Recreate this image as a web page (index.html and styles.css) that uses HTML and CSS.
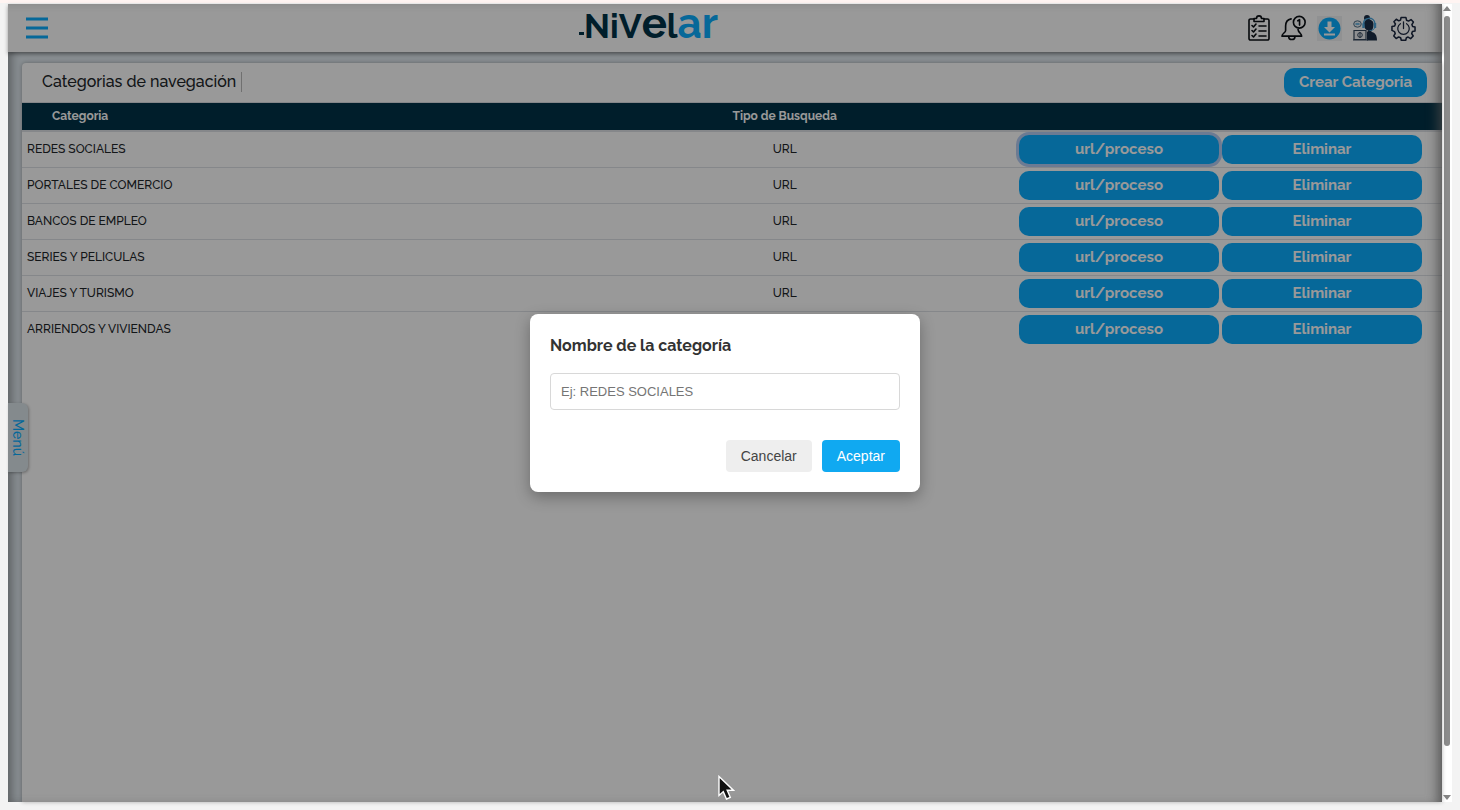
FILE: index.html
```
<!DOCTYPE html>
<html lang="es">
  <head>
    <meta charset="utf-8" />
    <title>Categorias de navegación</title>
    <link rel="stylesheet" href="styles.css">
  </head>

  <body>
    <div class="app">

      <!--Top bar-->
      <header class="topbar">
        <button class="iconBut" type="button" aria-label="Menu">
          <svg width="24" height="24" viewBox="0 0 24 24"><path d="M1 3h22M1 12h22M1 21h22" stroke="#0aaeff" stroke-width="3"/></svg>
        </button>

        <div class="logo">
          <svg width="5" height="6" viewBox="0 0 5 6"><path d="M0 0h5v3H0z" fill="#003248"/></svg>
          <span>NiV</span><span class="round">e</span><span>l</span><span class="round blue">ar</span>
        </div>

        <nav class="tools">
          <button class="iconBut" type="button" aria-label="Tareas">
            <svg width="22" height="26" viewBox="0 0 22 26" fill="none" stroke="#0b0f14" stroke-width="1.6" stroke-linejoin="round" stroke-linecap="round">
              <path d="M6 4H2.5A1.5 1.5 0 0 0 1 5.5V23.5A1.5 1.5 0 0 0 2.5 25H19.5A1.5 1.5 0 0 0 21 23.5V5.5A1.5 1.5 0 0 0 19.5 4H16"/>
              <path d="M6 6.5V3.5H8.5C8.5 0 13.5 0 13.5 3.5H16V6.5Z"/>
              <path d="M4 10.5l1.5 1.5 2.5-3M4 15.5l1.5 1.5 2.5-3M4 20.5l1.5 1.5 2.5-3M11 11h7M11 16h7M11 21h7"/>
            </svg>
          </button>
          <button class="iconBut" type="button" aria-label="Notificaciones">
            <svg width="25" height="26" viewBox="0 0 26 26" fill="none" stroke="#0b0f14" stroke-width="1.7" stroke-linecap="round" stroke-linejoin="round">
              <path d="M10.5 3.5C6.5 4.3 4.8 7.5 4.8 11V15.5C4.8 18 1 18.5 1 21.5H21.5C21.5 18.5 18 18 17.7 14.5"/>
              <path d="M8 22C8 26 14.5 26 14.5 22"/>
              <circle cx="19" cy="7" r="6.1"/>
              <path d="M17.5 5.5L19.3 4.3V10"/>
            </svg>
          </button>
          <button class="iconBut" type="button" aria-label="Descargar">
            <svg width="25" height="25" viewBox="0 0 25 25">
              <path fill="#f0f2f4" d="M0 0h25v25H0z"/>
              <circle cx="12.5" cy="12.5" r="11" fill="#0aaeff"/>
              <path fill="#fff" d="M10.5 5.5h4v5.5h3.5l-5.5 5.5L7 11h3.5zM7 17.5h11v2H7z"/>
            </svg>
          </button>
          <button class="iconBut" type="button" aria-label="Soporte">
            <svg width="24" height="26" viewBox="0 0 24 26">
              <circle cx="14" cy="3" r="3" fill="#1c2e46"/>
              <path fill="#1c2e46" d="M11 9C11 3 20.500 3 20.500 9C20.500 13 19.500 14.500 18.500 15.500V17C22 17.500 24 20 24 25.500H14V17L15.500 15.500C12 15 11 12 11 9Z"/>
              <path d="M10.5 9C10 2 21.5 1 22 9" fill="none" stroke="#4ba6dd" stroke-width="1.5"/>
              <path d="M10.5 8.5v4.5M22 8v5" fill="none" stroke="#4ba6dd" stroke-width="2.4"/>
              <path d="M21.5 12.5c0 2-2 3-5 3" fill="none" stroke="#4ba6dd"/>
              <ellipse cx="4.5" cy="9" rx="3.8" ry="3.2" fill="#e9eff3" stroke="#4f6f88"/>
              <path d="M2.5 9h4" stroke="#4ba6dd" stroke-width="1.5"/>
              <path d="M1 15.5h12v9H1zM0 25h15" fill="#eef1f4" stroke="#34475c" stroke-width="1.2"/>
              <circle cx="7" cy="20" r="2.3" fill="none" stroke="#34475c"/>
              <path d="M7 17v6" stroke="#34475c"/>
            </svg>
          </button>
          <button class="iconBut settings" type="button" aria-label="Ajustes">
            <svg width="25" height="25" viewBox="0 0 26 26" fill="none" stroke="#1b2740" stroke-width="1.6" stroke-linejoin="round" stroke-linecap="round">
              <path d="M10.5 1.5h5l.7 3 2 .8 2.6-1.6 2.5 2.6-1.6 2.6.8 2 2.5.6v4l-2.7.7-.8 2 1.6 2.6-2.7 2.7-2.6-1.6-1.8.8-.7 2.5h-4.6l-.7-2.6-2-.8-2.6 1.6-2.5-2.7 1.5-2.5-.8-2L1 15v-4l2.8-.7.8-2L3 5.9l2.5-2.5 2.6 1.6 1.8-.7z"/>
              <path d="M9.8 8a6 6 0 1 0 6.4 0M13 6v7" stroke-width="1.3"/>
            </svg>
          </button>
        </nav>
      </header>

      <!--Categories card-->
      <main class="content">
        <section class="card">
          <div class="cardHead">
            <h1 class="cardTitle">Categorias de navegación</h1>
            <button class="but" type="button">Crear Categoria</button>
          </div>

          <table class="categories">
            <thead>
              <tr><th>Categoria</th><th class="kind">Tipo de Busqueda</th><th class="actions"></th></tr>
            </thead>
            <tbody>
              <tr>
                <td>REDES SOCIALES</td><td class="kind">URL</td>
                <td class="actions"><div class="rowButs"><button class="but focused" type="button">url/proceso</button><button class="but" type="button">Eliminar</button></div></td>
              </tr>
              <tr>
                <td>PORTALES DE COMERCIO</td><td class="kind">URL</td>
                <td class="actions"><div class="rowButs"><button class="but" type="button">url/proceso</button><button class="but" type="button">Eliminar</button></div></td>
              </tr>
              <tr>
                <td>BANCOS DE EMPLEO</td><td class="kind">URL</td>
                <td class="actions"><div class="rowButs"><button class="but" type="button">url/proceso</button><button class="but" type="button">Eliminar</button></div></td>
              </tr>
              <tr>
                <td>SERIES Y PELICULAS</td><td class="kind">URL</td>
                <td class="actions"><div class="rowButs"><button class="but" type="button">url/proceso</button><button class="but" type="button">Eliminar</button></div></td>
              </tr>
              <tr>
                <td>VIAJES Y TURISMO</td><td class="kind">URL</td>
                <td class="actions"><div class="rowButs"><button class="but" type="button">url/proceso</button><button class="but" type="button">Eliminar</button></div></td>
              </tr>
              <tr>
                <td>ARRIENDOS Y VIVIENDAS</td><td class="kind"></td>
                <td class="actions"><div class="rowButs"><button class="but" type="button">url/proceso</button><button class="but" type="button">Eliminar</button></div></td>
              </tr>
            </tbody>
          </table>
        </section>
      </main>

      <button class="menuTab" type="button">Menú</button>

      <!--Dialog over the page-->
      <div class="overlay">
        <form class="dialog" action="#" role="dialog">
          <label class="dialogTitle" for="catName">Nombre de la categoría</label>
          <input class="dialogInput" type="text" id="catName" name="catName" placeholder="Ej: REDES SOCIALES">
          <div class="dialogButs">
            <button class="cancel" type="button">Cancelar</button>
            <button class="accept" type="button">Aceptar</button>
          </div>
        </form>
      </div>

      <svg class="pointer" width="17" height="26" viewBox="0 0 17 26"><path d="M1 1.5V20.5L5.3 16.6L8.5 24L12.3 22.3L9.2 15.2H15.3Z" fill="#111" stroke="#fff" stroke-width="1.4"/></svg>
    </div>

    <div class="scroll">
      <svg width="8" height="6" viewBox="0 0 8 6"><path d="M4 0l4 5H0z" fill="#858585"/></svg>
      <div class="thumb"></div>
      <svg width="8" height="6" viewBox="0 0 8 6"><path d="M4 6l4-5H0z" fill="#858585"/></svg>
    </div>
  </body>
</html>
```
FILE: styles.css
```
* {box-sizing: border-box;}

body {margin: 0;
      padding: 4px 8px 8px;
      height: 100vh;
      display: flex;
      font-family: Raleway, Lato, sans-serif;
      font-size: 12px;
      font-weight: 500;
      color: #212529;
      background: linear-gradient(#fff4f2 3px, #f3f3f3 3px);}

button {font-family: inherit;
        font-weight: inherit;
        border: 0;
        cursor: pointer;}

.app {position: relative;
      flex: 1;
      display: flex;
      flex-direction: column;
      background-color: #e2ebf1;}

/* top bar */
.topbar {display: flex;
         justify-content: space-between;
         align-items: center;
         height: 48px;
         padding: 0 26px 0 17px;
         background-color: white;
         box-shadow: 0 2px 4px rgba(0, 0, 0, 0.4);
         z-index: 1;}

.iconBut {display: flex;
          padding: 0;
          background: none;}

.logo {display: flex;
       align-items: baseline;
       padding-bottom: 6px;
       font-size: 34px;
       font-weight: bold;
       line-height: 40px;
       color: #003248;}

.logo .round {font-size: 42px;}

.logo .blue {color: #0aaeff;}

.tools {display: flex;
        justify-content: flex-end;
        align-items: center;
        gap: 11px;}

.settings {margin-left: 3px;}

/* card */
.content {flex: 1;
          display: flex;
          padding: 11px 0 0 14px;
          box-shadow: inset 8px 0 8px -4px rgba(0, 0, 0, 0.3);}

.card {flex: 1;
       background-color: white;
       border-radius: 4px 0 0 0;
       box-shadow: 0 0 4px rgba(0, 0, 0, 0.3);}

.cardHead {display: flex;
           justify-content: space-between;
           align-items: center;
           height: 40px;
           padding: 0 15px 1px 20px;
           border-bottom: 1px solid #dee2e6;}

.cardTitle {margin: 0;
            padding-right: 5px;
            font-size: 16px;
            font-weight: 500;
            line-height: 20px;
            border-right: 1px solid #bbb;}

.but {height: 29px;
      padding: 0 15px;
      font-size: 15px;
      font-weight: bold;
      line-height: 20px;
      color: white;
      background-color: #0aaeff;
      border-radius: 10px;}

.focused {box-shadow: 0 0 0 3px #b4cdf5;}

.categories {width: 100%;
             border-collapse: collapse;}

.categories th {height: 28px;
                padding: 0 0 2px 30px;
                text-align: left;
                color: white;
                background-color: #003248;
                border-bottom: 2px solid #dee2e6;}

.categories td {height: 36px;
                padding: 0 5px;
                border-top: 1px solid #dee2e6;}

.categories .kind {width: 33%;
                   padding-left: 0;
                   padding-right: 0;
                   text-align: center;}

.categories .actions {width: 423px;
                      padding-left: 0;
                      padding-right: 20px;}

.rowButs {display: flex;
          gap: 3px;}

.rowButs .but {flex: 1;}

/* side tab */
.menuTab {position: absolute;
          left: 0;
          top: 50%;
          height: 69px;
          width: 20px;
          padding: 0;
          font-size: 14px;
          line-height: 20px;
          writing-mode: vertical-rl;
          color: #0aaeff;
          background-color: #dde6ec;
          border-radius: 0 6px 6px 0;
          box-shadow: 1px 1px 3px rgba(0, 0, 0, 0.3);
          z-index: 1;}

/* dialog */
.overlay {position: absolute;
          inset: 0;
          display: flex;
          align-items: center;
          justify-content: center;
          background-color: rgba(0, 0, 0, 0.4);
          box-shadow: inset -10px 0 12px -6px rgba(70, 70, 70, 0.8);
          z-index: 2;}

.dialog {display: flex;
         flex-direction: column;
         width: 390px;
         padding: 20px;
         background-color: white;
         border-radius: 8px;
         box-shadow: 0 5px 15px rgba(0, 0, 0, 0.3);}

.dialogTitle {margin-bottom: 16px;
              font-size: 16px;
              font-weight: bold;
              line-height: 23px;
              color: #333;}

.dialogInput {height: 37px;
              padding: 0 10px;
              font-family: "Liberation Sans", Arial, sans-serif;
              font-size: 13px;
              border: 1px solid #d8d8d8;
              border-radius: 4px;}

.dialogButs {display: flex;
             justify-content: flex-end;
             gap: 10px;
             margin-top: 30px;}

.cancel, .accept {height: 32px;
                  padding: 0 15px;
                  font-family: "Liberation Sans", Arial, sans-serif;
                  font-size: 14px;
                  font-weight: normal;
                  border-radius: 4px;}

.cancel {color: #444;
         background-color: #eee;}

.accept {color: white;
         background-color: #10a9f1;}

.pointer {position: absolute;
          left: 710px;
          top: 771px;
          z-index: 3;}

/* scrollbar */
.scroll {display: flex;
         flex-direction: column;
         align-items: center;
         gap: 4px;
         width: 10px;
         padding: 2px 0;
         background-color: white;}

.thumb {width: 6px;
        height: 92%;
        margin-bottom: auto;
        background-color: #8b8b8b;
        border-radius: 3px;}
```
